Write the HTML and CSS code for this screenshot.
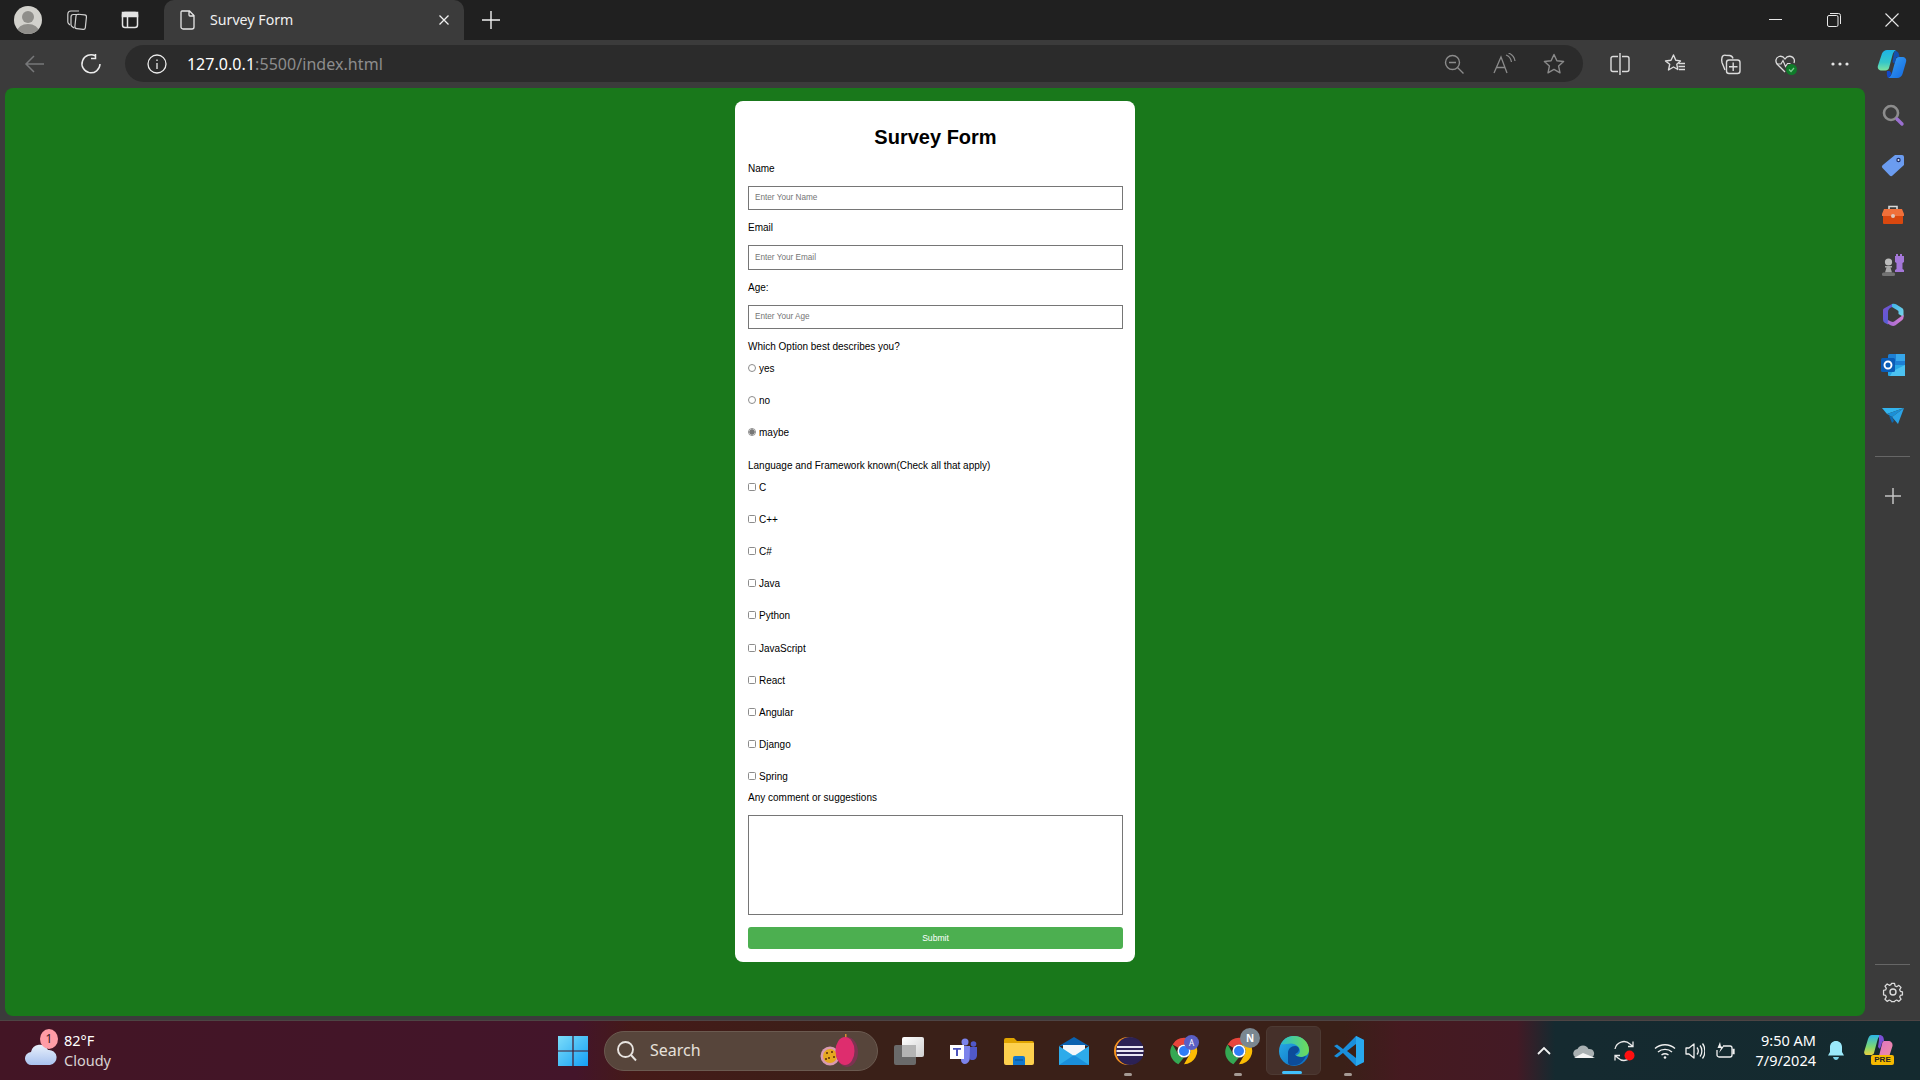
FILE: index.html
```html
<!DOCTYPE html>
<html lang="en">
<head>
<meta charset="utf-8">
<title>Survey Form</title>
<link rel="stylesheet" href="styles.css">
</head>
<body>
<header class="titlebar">
  <div class="cell profile"><svg width="28" height="28" viewBox="0 0 28 28"><defs><clipPath id="av"><circle cx="14" cy="14" r="14"/></clipPath></defs><g clip-path="url(#av)"><rect width="28" height="28" fill="#d2d1cc"/><circle cx="14" cy="11" r="6" fill="#8f8e8a"/><ellipse cx="14" cy="26" rx="11" ry="8" fill="#8f8e8a"/></g></svg></div>
  <div class="cell workspaces"><svg width="24" height="24" viewBox="0 0 24 24" fill="none" stroke="#d0d0d0" stroke-width="1.200"><rect x="10.500" y="6.500" width="10.500" height="14.500" rx="2" transform="rotate(6 15 13)"/><path d="M9 20 7 18.500c-.8-.6-1-1.200-1-2V9c0-1.400.8-2.500 2.300-2.500H14"/><path d="M5 17 3.500 15.500c-.6-.6-.7-1.200-.7-2V6.500C2.800 4.500 4 3 6 3h8"/></svg></div>
  <div class="cell verticaltabs"><svg width="20" height="20" viewBox="0 0 20 20" fill="none" stroke="#e4e4e4" stroke-width="1.500"><rect x="2.500" y="2.500" width="15" height="15" rx="2.500"/><rect x="2.500" y="2.500" width="15" height="4" fill="#e4e4e4"/><path d="M7.500 6v11"/></svg></div>
  <div class="tab">
    <svg class="tab-doc" width="18" height="20" viewBox="0 0 18 20" fill="none" stroke="#e6e6e6" stroke-width="1.300"><path d="M3 1h7.500L15 5.500V17a2 2 0 0 1-2 2H4a2 2 0 0 1-2-2V2.500C2 1.600 2.400 1 3 1ZM10 1v4a1 1 0 0 0 1 1h4"/></svg>
    <span class="tab-title">Survey Form</span>
    <svg class="tab-close" width="12" height="12" viewBox="0 0 12 12" stroke="#f0f0f0" stroke-width="1.300"><path d="M1.500 1.500l9 9M10.500 1.500l-9 9"/></svg>
  </div>
  <div class="cell newtab"><svg width="20" height="20" viewBox="0 0 20 20" stroke="#f0f0f0" stroke-width="1.400"><path d="M10 1v18M1 10h18"/></svg></div>
  <div class="window-controls">
    <svg width="14" height="14" viewBox="0 0 14 14" stroke="#e8e8e8"><path d="M0 6.500h13"/></svg>
    <svg width="14" height="14" viewBox="0 0 14 14" fill="none" stroke="#e8e8e8"><rect x=".5" y="2.500" width="10.500" height="11" rx="1.500"/><path d="M3 .5h8.500A2 2 0 0 1 13.500 2.500V11"/></svg>
    <svg width="14" height="14" viewBox="0 0 14 14" stroke="#e8e8e8" stroke-width="1.100"><path d="M.5.5l13 13M13.500.5l-13 13"/></svg>
  </div>
</header>

<nav class="toolbar">
  <div class="navcell"><svg width="22" height="20" viewBox="0 0 22 20" fill="none" stroke="#77787a" stroke-width="1.500"><path d="M20 10H2M10 2l-8 8 8 8"/></svg></div>
  <div class="navcell"><svg width="22" height="22" viewBox="0 0 22 22" fill="none" stroke="#ececec" stroke-width="1.500"><path d="M15.500 3A9 9 0 1 0 20 11M15.500 1v4.500H11"/></svg></div>
  <div class="address">
    <svg class="info" width="22" height="22" viewBox="0 0 22 22" fill="none" stroke="#ececec" stroke-width="1.300"><circle cx="11" cy="11" r="9"/><path d="M11 10v6M11 6.500v1.500"/></svg>
    <span class="url"><span class="host">127.0.0.1</span>:5500/index.html</span>
    <div class="addr-icons">
      <svg width="22" height="22" viewBox="0 0 22 22" fill="none" stroke="#8b8b8b" stroke-width="1.400"><circle cx="9.500" cy="9.500" r="7"/><path d="M14.500 14.500l6 6M6 9.500h7"/></svg>
      <svg width="24" height="22" viewBox="0 0 24 22" fill="none" stroke="#8b8b8b" stroke-width="1.300"><path d="M2 20 9 4l6 16M4.500 14.500h8.500M14 2c3 1 5 4 5.500 7M16.500 0c3.500 1.500 6 4.500 6.500 8"/></svg>
      <svg width="22" height="22" viewBox="0 0 22 22" fill="none" stroke="#8b8b8b" stroke-width="1.400"><path d="M11 1.500l2.900 6.200 6.700.8-5 4.600 1.400 6.700-6-3.400-6 3.400 1.400-6.700-5-4.600 6.700-.8Z" stroke-linejoin="round"/></svg>
    </div>
  </div>
  <div class="tools">
    <svg width="22" height="22" viewBox="0 0 22 22" fill="none" stroke="#dcdcdc" stroke-width="1.400"><path d="M9 3.500H4a2 2 0 0 0-2 2v11a2 2 0 0 0 2 2h5M13 3.500h5a2 2 0 0 1 2 2v11a2 2 0 0 1-2 2h-5M11 0v22"/></svg>
    <svg width="22" height="22" viewBox="0 0 22 22" fill="none" stroke="#dcdcdc" stroke-width="1.400"><path d="M9.500 2l2.300 5.300 4.700.6-3.700 3.400 1 5.200-4.300-2.500-5 3 1.200-5.700L1.500 8l5.500-.7Z" stroke-linejoin="round"/><path d="M14.500 10.500H21M14.500 13.500H21M15 16.500h6"/></svg>
    <svg width="22" height="22" viewBox="0 0 22 22" fill="none" stroke="#dcdcdc" stroke-width="1.400"><path d="M6 17 3 9.500C2.500 8 2.500 6.500 3 4.500c.400-1.500 2-2.500 3.500-2.300l4 .3c1.800.2 3 1.200 3.500 3"/><rect x="7.500" y="7" width="13.500" height="13.500" rx="2.500"/><path d="M14.200 9.500v8.500M10 13.700h8.500"/></svg>
    <svg width="24" height="24" viewBox="0 0 24 24" fill="none"><path d="M11 20 3.500 12.500C1 10 1.500 5.500 5 4.500c2.500-.7 4.500.3 6 2.500 1.500-2.200 3.500-3.200 6-2.500 3 .8 4 4 3 6.500" stroke="#dcdcdc" stroke-width="1.300"/><path d="M2.500 12H7l2-3.500 2.500 6 2-3h3" stroke="#dcdcdc" stroke-width="1.200"/><circle cx="17.500" cy="17.500" r="5.500" fill="#0f7b2a"/><path d="M15 17.500l2 2 3-3.500" stroke="#7fc88f" stroke-width="1.200"/></svg>
    <svg class="tool-more" width="22" height="22" viewBox="0 0 22 22" fill="#e4e4e4"><circle cx="4" cy="11" r="1.600"/><circle cx="11" cy="11" r="1.600"/><circle cx="18" cy="11" r="1.600"/></svg>
  </div>
  <div class="navcell copilot"><svg width="30" height="30" viewBox="0 0 30 30"><defs><linearGradient id="cpa" x1="0" y1="0" x2="0" y2="1"><stop offset="0" stop-color="#1db4e6"/><stop offset=".6" stop-color="#35c7c9"/><stop offset="1" stop-color="#7fe3a0"/></linearGradient><linearGradient id="cpb" x1="0" y1="0" x2="1" y2="1"><stop offset="0" stop-color="#37a3f5"/><stop offset="1" stop-color="#1468e0"/></linearGradient></defs><path d="M10 1h9c-2 1-3 3-3.500 5L12 19c-.4 1.500-1.800 2.500-3.500 2.500H5c-3 0-5-2-4-5l4-12C6 2.500 8 1 10 1Z" fill="url(#cpa)"/><path d="M22 8h3c3 0 5 2 4 5l-3.500 12c-.6 2-2.500 4-5.500 4h-9c2-1 3.300-2.800 4-5l3.500-13c.4-1.800 2-3 3.500-3Z" fill="url(#cpb)"/><path d="M18 2c2.500 0 4 1.500 4.500 6h-3l-2 7-2-2 1-6c.2-2 .5-4 1.500-5Z" fill="#1250b0"/><path d="M10 22h2.500l2 2c-.5 2-1.500 4-3.500 5-1-2-1.500-4-1-7Z" fill="#1248c8"/></svg></div>
</nav>

<div class="workspace">
  <main class="page">
    <form class="card">
      <h1 class="form-title">Survey Form</h1>
      <label class="field-label">Name</label>
      <input class="text-input" type="text" placeholder="Enter Your Name">
      <label class="field-label">Email</label>
      <input class="text-input" type="email" placeholder="Enter Your Email">
      <label class="field-label">Age:</label>
      <input class="text-input" type="text" placeholder="Enter Your Age">
      <p class="question">Which Option best describes you?</p>
      <label class="option"><input class="radio" type="radio" name="opt">yes</label>
      <label class="option"><input class="radio" type="radio" name="opt">no</label>
      <label class="option"><input class="radio" type="radio" name="opt" checked>maybe</label>
      <p class="question">Language and Framework known(Check all that apply)</p>
      <label class="option"><input class="check" type="checkbox">C</label>
      <label class="option"><input class="check" type="checkbox">C++</label>
      <label class="option"><input class="check" type="checkbox">C#</label>
      <label class="option"><input class="check" type="checkbox">Java</label>
      <label class="option"><input class="check" type="checkbox">Python</label>
      <label class="option"><input class="check" type="checkbox">JavaScript</label>
      <label class="option"><input class="check" type="checkbox">React</label>
      <label class="option"><input class="check" type="checkbox">Angular</label>
      <label class="option"><input class="check" type="checkbox">Django</label>
      <label class="option option-last"><input class="check" type="checkbox">Spring</label>
      <label class="field-label">Any comment or suggestions</label>
      <textarea class="comment"></textarea>
      <button class="submit" type="button">Submit</button>
    </form>
  </main>
  <aside class="sidebar">
    <svg width="24" height="24" viewBox="0 0 24 24" fill="none"><circle cx="10" cy="10" r="7" stroke="#8c8c8c" stroke-width="2.600"/><path d="M16 16l5 5" stroke="#9a6fd0" stroke-width="3.400" stroke-linecap="round"/></svg>
    <svg width="24" height="24" viewBox="0 0 24 24"><path d="M14 2h7a2 2 0 0 1 2 2v8L11.500 22.500a2 2 0 0 1-2.800 0L1.500 15a2 2 0 0 1 0-2.800Z" fill="#6b9cf0"/><circle cx="17.500" cy="7" r="2.200" fill="#1d2f66"/><circle cx="17.500" cy="7" r="1" fill="#dfe8fb"/></svg>
    <svg width="24" height="24" viewBox="0 0 24 24"><path d="M8 6V3.500h8V6" fill="none" stroke="#d9d9d9" stroke-width="1.600"/><path d="M3 6h18l2 5v2H1v-2Z" fill="#f0703a"/><path d="M2 13h20v7a1 1 0 0 1-1 1H3a1 1 0 0 1-1-1Z" fill="#d9480f"/><circle cx="12" cy="13" r="2" fill="#e0c8bc"/></svg>
    <svg width="24" height="24" viewBox="0 0 24 24"><path d="M15 1h2v2h2V1h2v2h2v6l-1.500 1v6l1.500 1v2h-9v-2l1.500-1v-6L14 9V3h1Z" fill="#a477d8"/><circle cx="7.500" cy="9" r="3.600" fill="#bcbcbc"/><path d="M4 13h7v1.500H9.500l1.500 5H4l1.500-5H4Z" fill="#a8a8a8"/><rect x="1" y="19.500" width="13" height="3.500" rx="1.500" fill="#727272"/></svg>
    <svg width="24" height="24" viewBox="0 0 24 24"><defs><linearGradient id="m1" x1="0" y1="0" x2="1" y2="1"><stop offset="0" stop-color="#7d4fd0"/><stop offset="1" stop-color="#3f67d6"/></linearGradient><linearGradient id="m2" x1="0" y1="0" x2="1" y2="0"><stop offset="0" stop-color="#a267d6"/><stop offset="1" stop-color="#d07ed0"/></linearGradient><linearGradient id="m3" x1="0" y1="0" x2="1" y2="1"><stop offset="0" stop-color="#3fb2ea"/><stop offset="1" stop-color="#7ad8e8"/></linearGradient></defs><path d="M11 1 3 5.500C2 6 2 7 2 8v8c0 2 .6 3 2 4l3 1.500V9c0-2 1-3.500 3-4.500L14 3Z" fill="url(#m1)"/><path d="M11 1c1.500-.6 3-.4 4 .2l6 3.800c1 .7 1.500 1.800 1.500 3V14l-5-3V9c0-1-.5-1.500-1.500-2L11 4Z" fill="url(#m3)"/><path d="M22.500 14c0 1.500-.5 2.500-1.500 3.200l-6.500 5c-1.500 1-3 1-4.500.3L6.500 20.500 7 17l3 1.500c1.500.7 2.500.5 3.500-.2l4-3 5-3.500Z" fill="url(#m2)"/></svg>
    <svg width="24" height="24" viewBox="0 0 24 24"><rect x="7" y="1" width="17" height="21" rx="1.500" fill="#1d7fd4"/><rect x="15" y="1" width="9" height="7" fill="#36a6ea"/><path d="M7 12h17v10a1 1 0 0 1-1 1H8a1 1 0 0 1-1-1Z" fill="#26a6e5"/><path d="M12 18l12-6v11H9Z" fill="#4cc2f1"/><rect x="0" y="5" width="14" height="14" rx="1.500" fill="#0a5cb6"/><circle cx="7" cy="12" r="3.500" fill="none" stroke="#fff" stroke-width="1.900"/></svg>
    <svg width="24" height="24" viewBox="0 0 24 24"><path d="M1 5h22L6 11Z" fill="#33b4ee"/><path d="M6 11 23 5 11 14Z" fill="#1b8fd6"/><path d="M11 14 23 5 17 21Z" fill="#2ba3e6"/><path d="M8 12.500 11 14l2 4-2 2Z" fill="#0d66b0"/></svg>
    <div class="side-divider"></div>
    <svg width="16" height="16" viewBox="0 0 16 16" stroke="#c4c4c4" stroke-width="1.500"><path d="M8 0v16M0 8h16"/></svg>
    <div class="side-spacer"></div>
    <div class="side-divider side-divider-low"></div>
    <svg class="gear" width="22" height="22" viewBox="0 0 22 22" fill="none" stroke="#dcdcdc" stroke-width="1.400"><circle cx="11" cy="11" r="3"/><path d="M9.300 1.500h3.400l.6 2.800 1.800.8 2.400-1.500 2.400 2.400-1.500 2.400.8 1.800 2.300.6v3.400l-2.300.6-.8 1.800 1.500 2.400-2.400 2.400-2.400-1.500-1.800.8-.6 1.100H9.300l-.6-1.100-1.800-.8-2.400 1.500-2.400-2.400 1.500-2.400-.8-1.800-2.300-.6V9.300l2.300-.6.8-1.800-1.500-2.400 2.400-2.400 2.400 1.500 1.800-.8Z" stroke-linejoin="round" transform="translate(1.100 1.100) scale(.9)"/></svg>
  </aside>
</div>

<footer class="taskbar">
  <div class="weather">
    <div class="weather-icon">
      <svg width="32" height="26" viewBox="0 0 32 26"><defs><linearGradient id="cl" x1="0" y1="0" x2="0" y2="1"><stop offset="0" stop-color="#e8f0fb"/><stop offset="1" stop-color="#a9c2ef"/></linearGradient></defs><path d="M7 25a6.500 6.500 0 0 1-1-13 9 9 0 0 1 17-2 7.500 7.500 0 0 1 2 15Z" fill="url(#cl)"/></svg>
      <span class="weather-badge">1</span>
    </div>
    <div class="weather-text"><span class="temp">82°F</span><span class="cond">Cloudy</span></div>
  </div>
  <div class="center">
    <svg class="start" width="30" height="30" viewBox="0 0 30 30"><defs><linearGradient id="w" x1="0" y1="0" x2="1" y2="1"><stop offset="0" stop-color="#7cdcf9"/><stop offset="1" stop-color="#14a0f5"/></linearGradient></defs><path d="M0 0h14.400v14.400H0ZM15.600 0H30v14.400H15.600ZM0 15.600h14.400V30H0ZM15.600 15.600H30V30H15.600Z" fill="url(#w)"/></svg>
    <div class="searchbox">
      <svg width="22" height="22" viewBox="0 0 22 22" fill="none" stroke="#e8e4e0" stroke-width="1.900"><circle cx="9.500" cy="9.500" r="7.500"/><path d="M15 15l5 5.500"/></svg>
      <span class="search-label">Search</span>
      <svg class="fruit" width="40" height="34" viewBox="0 0 40 34"><circle cx="10" cy="22" r="9.500" fill="#d99ab0"/><circle cx="10" cy="22" r="7" fill="#e6a820"/><g fill="#5b2a0c"><circle cx="7" cy="19" r="1"/><circle cx="12" cy="18" r="1"/><circle cx="9" cy="24" r="1"/><circle cx="14" cy="23" r="1"/><circle cx="6" cy="25" r="1"/></g><path d="M25 0h1.500v6H25Z" fill="#d68a30"/><ellipse cx="27" cy="18" rx="11" ry="15" fill="#7d3352"/><ellipse cx="25" cy="17" rx="9.500" ry="14" fill="#de2d6e"/></svg>
    </div>
    <div class="apps">
      <div class="app"><svg width="30" height="28" viewBox="0 0 30 28"><defs><linearGradient id="tv" x1="0" y1="0" x2="1" y2="1"><stop offset="0" stop-color="#fff"/><stop offset="1" stop-color="#d0d0d0"/></linearGradient></defs><rect x="0" y="8" width="22" height="20" rx="2" fill="#6a6a6a"/><rect x="8" y="0" width="22" height="20" rx="2" fill="url(#tv)"/><rect x="8" y="8" width="14" height="12" fill="#b4b4b4"/></svg></div>
      <div class="app"><svg width="28" height="26" viewBox="0 0 28 26"><circle cx="15" cy="4" r="3.500" fill="#7b83eb"/><circle cx="23.500" cy="6" r="2.800" fill="#5059c9"/><path d="M11 8h9v11c0 4-2.500 7-5 7s-4-2-4-4Z" fill="#7b83eb"/><path d="M20 9h7v8c0 3-2 5-4.500 5-1.500 0-2.500-.5-3-1Z" fill="#5059c9"/><rect x="0" y="7" width="14" height="14" fill="#fff"/><path d="M3 10h8v1.800H8V18H6v-6.200H3Z" fill="#4b53bc"/></svg></div>
      <div class="app"><svg width="30" height="28" viewBox="0 0 30 28"><path d="M0 3a2 2 0 0 1 2-2h8l3 3h15a2 2 0 0 1 2 2v6H0Z" fill="#e0a400"/><path d="M0 6h30v20a2 2 0 0 1-2 2H2a2 2 0 0 1-2-2Z" fill="#fdd04e"/><path d="M9 21a2 2 0 0 1 2-2h8a2 2 0 0 1 2 2v7H9Z" fill="#1178cf"/><path d="M11 23h8" stroke="#0b4d8a" stroke-width="1"/></svg></div>
      <div class="app"><svg width="30" height="28" viewBox="0 0 30 28"><path d="M0 9 15 0l15 9Z" fill="#0a62b0"/><path d="M4 8h22v6l-11 6-11-6Z" fill="#f4f7fa"/><path d="M0 9l15 10L30 9v19H0Z" fill="#2dabea"/><path d="M0 28 15 18l15 10Z" fill="#1a8fdb"/></svg></div>
      <div class="app app-open"><svg width="30" height="30" viewBox="0 0 30 30"><circle cx="14" cy="15" r="14" fill="#f7941e"/><circle cx="16" cy="15" r="14" fill="#2c2255"/><circle cx="16" cy="15" r="13" fill="#2c2255"/><g fill="#e8e6f2"><rect x="3" y="10" width="26" height="2"/><rect x="2.500" y="14" width="27" height="2"/><rect x="3" y="18" width="26" height="2"/></g></svg></div>
      <div class="app"><svg width="30" height="30" viewBox="0 0 48 48"><path d="M24 3a21 21 0 0 1 18.200 10.500H24a10.500 10.500 0 0 0-9.100 5.250L5.800 13.500A21 21 0 0 1 24 3Z" fill="#e8453c"/><path d="M5.800 13.500l9.100 15.750A10.500 10.500 0 0 0 24 34.500L15 45A21 21 0 0 1 5.800 13.500Z" fill="#34a853"/><path d="M42.200 13.500A21 21 0 0 1 24 45l9.100-15.750A10.500 10.500 0 0 0 33.100 18.750 10.500 10.500 0 0 0 24 13.500Z" fill="#fbbc04"/><circle cx="24" cy="24" r="10.500" fill="#fff"/><circle cx="24" cy="24" r="8" fill="#2f7df6"/></svg><span class="app-badge badge-a">A</span></div>
      <div class="app app-open"><svg width="30" height="30" viewBox="0 0 48 48"><path d="M24 3a21 21 0 0 1 18.200 10.500H24a10.500 10.500 0 0 0-9.100 5.250L5.800 13.500A21 21 0 0 1 24 3Z" fill="#e8453c"/><path d="M5.800 13.500l9.100 15.750A10.500 10.500 0 0 0 24 34.500L15 45A21 21 0 0 1 5.800 13.500Z" fill="#34a853"/><path d="M42.200 13.500A21 21 0 0 1 24 45l9.100-15.750A10.500 10.500 0 0 0 33.100 18.750 10.500 10.500 0 0 0 24 13.500Z" fill="#fbbc04"/><circle cx="24" cy="24" r="10.500" fill="#fff"/><circle cx="24" cy="24" r="8" fill="#2f7df6"/></svg><span class="app-badge badge-n">N</span></div>
      <div class="app app-active"><svg width="30" height="30" viewBox="0 0 30 30"><defs><linearGradient id="e1" x1="0" y1="0" x2="1" y2="1"><stop offset="0" stop-color="#29b0e8"/><stop offset="1" stop-color="#0a68c0"/></linearGradient><linearGradient id="e2" x1="0" y1="0" x2="1" y2="0"><stop offset="0" stop-color="#2bc0c8"/><stop offset="1" stop-color="#6fdc58"/></linearGradient></defs><circle cx="15" cy="15" r="15" fill="url(#e1)"/><path d="M2 8C5 2 10 0 15 0c8 0 15 6 15 14 0 4-3 7-8 7-2 0-4-.5-5-1.500 3-1 4-3 4-5 0-3-4-7-9-7-4 0-8 1.500-10 0.500Z" fill="url(#e2)"/><path d="M9 17c0-4 3-7 7-7 2.500 0 4 1.500 4 3.500 0 1.500-1 3-3 4-2 1 0 3 5 3.500 2 .2 4-.5 5-1.500-2 6-7 10-13 10-3 0-5-1-5-3 0-3 0-6 0-9.500Z" fill="#0c4c9a"/></svg></div>
      <div class="app app-open"><svg width="30" height="30" viewBox="0 0 30 30"><path d="M22 0 30 4v22l-8 4L9 17l-6 4.500L0 20l6.500-5L0 10l3-1.500L9 13Z" fill="#1a8fdc"/><path d="M22 8v14l-9-7Z" fill="#3b2018"/><path d="M22 0 30 4v22l-8 4Z" fill="#28a8ee"/></svg></div>
    </div>
  </div>
  <div class="tray">
    <svg class="t-chev" width="16" height="10" viewBox="0 0 16 10" fill="none" stroke="#f2f2f2" stroke-width="1.800"><path d="M2 8l6-6 6 6"/></svg>
    <svg class="t-cloud" width="22" height="14" viewBox="0 0 22 14"><path d="M5 14a4.500 4.500 0 0 1-.5-9 6 6 0 0 1 11 0 4.500 4.500 0 0 1 2 9Z" fill="#a9b0b2"/><path d="M1 14l9-5 5 2 7 3Z" fill="#f4f4f4"/></svg>
    <svg class="t-sync" width="22" height="22" viewBox="0 0 22 22" fill="none" stroke="#eaeaea" stroke-width="1.300"><path d="M1 9a9 9 0 0 1 15-5l3 2.500M19 1.500V6.500H14M19 13a9 9 0 0 1-15 5l-3-2.500M1 20.500v-5h5"/><circle cx="15.500" cy="15.500" r="5" fill="#ff1010" stroke="none"/></svg>
    <svg class="t-wifi" width="22" height="16" viewBox="0 0 22 16" fill="none" stroke="#f0f0f0" stroke-width="1.400"><path d="M1 5.500c5.500-5 14.500-5 20 0M4 9c3.800-3.500 10.200-3.500 14 0M7.500 12c2-1.500 5-1.500 7 0"/><circle cx="11" cy="14.500" r="1.300" fill="#f0f0f0" stroke="none"/></svg>
    <svg class="t-vol" width="20" height="18" viewBox="0 0 20 18" fill="none" stroke="#f0f0f0" stroke-width="1.300"><path d="M1 6h3l5-4v14l-5-4H1Z" stroke-linejoin="round"/><path d="M12 5.500c1.500 2 1.500 5 0 7M15 3.500c2.500 3 2.500 8 0 11M17.500 1.500c3.200 4 3.200 11 0 15"/></svg>
    <svg class="t-batt" width="20" height="18" viewBox="0 0 20 18" fill="none" stroke="#f0f0f0" stroke-width="1.300"><path d="M8 4h7a2 2 0 0 1 2 2v7a2 2 0 0 1-2 2H4a2 2 0 0 1-2-2V8"/><path d="M17.500 7.500h1.500v4h-1.500" fill="#f0f0f0"/><path d="M5 0 2.500 6H6l-2 5 5-6.500H6Z" fill="#f0f0f0" stroke="none"/></svg>
    <div class="clock"><span>9:50 AM</span><span>7/9/2024</span></div>
    <svg class="t-bell" width="18" height="20" viewBox="0 0 18 20"><path d="M9 0c3.500 0 6 2.600 6 6v5l2 3.500H1L3 11V6c0-3.400 2.500-6 6-6Z" fill="#9be9fb"/><path d="M6 16h6c-.5 2-1.700 3-3 3s-2.500-1-3-3Z" fill="#7cd3ea"/></svg>
    <div class="pre-icon"><svg width="30" height="24" viewBox="0 0 30 24"><defs><linearGradient id="p1" x1="0" y1="0" x2="0" y2="1"><stop offset="0" stop-color="#2bb5e8"/><stop offset=".6" stop-color="#7fd870"/><stop offset="1" stop-color="#e8d040"/></linearGradient><linearGradient id="p2" x1="0" y1="0" x2="1" y2="1"><stop offset="0" stop-color="#e070c8"/><stop offset="1" stop-color="#f090a0"/></linearGradient></defs><path d="M8 0h9c-2 1-3 3-3.500 5L10 18c-.4 1.500-1.800 2-3.500 2H3c-2 0-3.500-1.500-2.600-4L4 4C5 1.500 6 0 8 0Z" fill="url(#p1)"/><path d="M20 6h4c3 0 5 2 4.500 5L25 22c-.4 1.300-1.500 2-3 2h-10c2-1 3-2.800 3.500-5l2.500-10c.3-1.800 1-3 2-3Z" fill="url(#p2)"/><path d="M15 0c3 0 5 1.500 5 6-1.400 0-2 1-2.300 3L16 14l-2-2 1-7Z" fill="#7a4fd6"/></svg><span class="pre-tag">PRE</span></div>
  </div>
</footer>
</body>
</html>
```

FILE: styles.css
```css
* { box-sizing: border-box; }
html, body { margin: 0; padding: 0; }
body {
  width: 1920px;
  height: 1080px;
  overflow: hidden;
  display: flex;
  flex-direction: column;
  background: #3b3b3b;
  font-family: "Noto Sans", "Open Sans", sans-serif;
}
svg { display: block; flex: none; }

/* title bar */
.titlebar { height: 40px; flex: none; display: flex; background: #202020; }
.cell { height: 40px; display: flex; align-items: center; justify-content: center; }
.profile { width: 56px; }
.workspaces { width: 42px; }
.verticaltabs { width: 44px; margin-left: 10px; }
.tab {
  width: 300px;
  height: 40px;
  margin-left: 12px;
  padding: 0 14px 0 15px;
  display: flex;
  align-items: center;
  background: #3b3b3b;
  border-radius: 10px 10px 0 0;
  color: #f0f0f0;
  font-size: 14.2px;
}
.tab-title { margin-left: 13px; flex: 1; margin-top: -1px; }
.newtab { width: 54px; }
.window-controls { margin-left: auto; display: flex; align-items: center; gap: 44px; padding-right: 21px; }

/* toolbar */
.toolbar { height: 48px; flex: none; display: flex; align-items: flex-start; padding: 5px 0 0 7px; background: #3b3b3b; }
.navcell { width: 56px; height: 37px; display: flex; align-items: center; justify-content: center; }
.address {
  width: 1460px;
  height: 37px;
  margin-left: 6px;
  padding: 0 18px 0 21px;
  display: flex;
  align-items: center;
  background: #2b2b2b;
  border-radius: 19px;
  font-size: 16px;
  letter-spacing: .05px;
  color: #8d8d8d;
}
.url { margin-left: 19px; }
.host { color: #fff; }
.addr-icons { margin-left: auto; display: flex; align-items: center; gap: 27px; }
.tools { width: 282px; height: 37px; padding: 0 0 0 25.5px; display: flex; align-items: center; gap: 33px; }
.tool-more { margin-left: -1.5px; }
.copilot { width: 56px; margin-left: -1px; }

/* page */
.workspace { height: 932px; flex: none; display: flex; }
.page {
  width: 1860px;
  height: 928px;
  margin-left: 5px;
  padding-top: 13px;
  display: flex;
  justify-content: center;
  align-items: flex-start;
  background: #19781b;
  border-radius: 8px;
}
.card {
  width: 400px;
  display: flex;
  flex-direction: column;
  align-items: flex-start;
  padding: 24px 12px 13px 13px;
  background: #fff;
  border-radius: 8px;
  font-family: "Liberation Sans", Arial, sans-serif;
  font-size: 10px;
  line-height: 12px;
  color: #000;
}
.form-title {
  align-self: stretch;
  margin: 0 0 12.5px;
  height: 25px;
  font-size: 20px;
  line-height: 25px;
  font-weight: 700;
  text-align: center;
}
.field-label { display: block; height: 12px; margin-bottom: 11px; }
.text-input {
  width: 375px;
  height: 24.5px;
  margin: 0 0 12px;
  padding: 0 6px;
  border: 1.34px solid #767676;
  border-radius: 0;
  background: #fff;
  font: 8.2px "Liberation Sans", Arial, sans-serif;
}
.text-input::placeholder { color: #757575; }
.question { margin: 0 0 10px; height: 12px; }
.option { display: flex; align-items: center; height: 12px; margin-bottom: 20.2px; }
.option-last { margin-bottom: 8.5px; }
.radio, .check {
  appearance: none;
  width: 8px;
  height: 8px;
  margin: -2px 3px 0 0;
  background: #fff;
  border: 1px solid #8c8c8c;
  flex: none;
}
.radio { border-radius: 50%; }
.radio:checked { background: radial-gradient(circle, #777 0, #777 2.4px, #fff 3px); }
.check { border-radius: 1.500px; }
.comment {
  display: block;
  width: 375px;
  height: 100px;
  margin: 0 0 12px;
  border: 1.34px solid #767676;
  border-radius: 0;
  resize: none;
  background: #fff;
}
.submit {
  width: 375px;
  height: 22px;
  border: 0;
  border-radius: 3px;
  background: #4caf50;
  color: #fff;
  font: 8.6px "Liberation Sans", Arial, sans-serif;
}

/* edge sidebar */
.sidebar {
  width: 55px;
  height: 932px;
  padding: 15px 0 17px;
  display: flex;
  flex-direction: column;
  align-items: center;
  gap: 26px;
  background: #3b3b3b;
}
.side-divider { width: 35px; height: 1px; background: #666; flex: none; margin: 3px 0 5px; }
.side-divider-low { margin: 0 0 -10px; }
.side-spacer { flex: 1; margin: -26px 0; }

/* taskbar */
.taskbar {
  height: 60px;
  flex: none;
  position: relative;
  display: flex;
  align-items: center;
  border-top: 1px solid #4d4444;
  background: linear-gradient(90deg, #431525 0, #43152a 30%, #451a18 33%, #3a2018 45%, #3a2018 70%, #451a20 73%, #431a25 79%, #152a30 81%, #142a2f 100%);
  color: #fff;
}
.weather { width: 558px; flex: none; display: flex; align-items: center; padding-left: 25px; }
.weather-icon { position: relative; width: 32px; height: 26px; margin-top: 4px; }
.weather-badge {
  position: absolute;
  left: 15px;
  top: -11px;
  width: 18px;
  height: 20px;
  border-radius: 50%;
  background: #ff9ca6;
  color: #3a1a20;
  font-size: 12px;
  line-height: 20px;
  text-align: center;
}
.weather-text { margin-left: 7px; margin-top: -2px; display: flex; flex-direction: column; font-size: 14.5px; line-height: 20px; }
.cond { color: #d9d2d2; }
.center { flex: none; display: flex; align-items: center; }
.start { margin-top: 0; }
.searchbox {
  width: 274px;
  height: 40px;
  margin-left: 16px;
  padding: 0 17px 0 11px;
  display: flex;
  align-items: center;
  background: #57453b;
  border: 1px solid #6b5a50;
  border-radius: 20px;
  color: #e6e0da;
  font-size: 16px;
}
.search-label { margin-left: 12px; margin-top: -1px; }
.fruit { margin-left: auto; }
.apps { margin-left: 3px; display: flex; align-items: center; }
.app {
  position: relative;
  width: 55px;
  height: 49px;
  display: flex;
  align-items: center;
  justify-content: center;
}
.app-open::after, .app-active::after {
  content: "";
  position: absolute;
  left: 23px;
  bottom: -1px;
  width: 8px;
  height: 3px;
  border-radius: 2px;
  background: #a59a94;
}
.app-active { background: #45302a; border-radius: 6px; border: 1px solid #4d3a33; }
.app-active::after { left: 15px; width: 20px; background: #42c0fb; bottom: 0; }
.app-badge {
  position: absolute;
  border-radius: 50%;
  text-align: center;
  color: #fff;
}
.badge-a { left: 28px; top: 9px; width: 15px; height: 15px; font-size: 8px; line-height: 15px; background: #5a5fc4; }
.badge-n { left: 29px; top: 2px; width: 20px; height: 20px; font-size: 10px; line-height: 20px; background: #7a8790; font-weight: 700; }
.tray { flex: none; position: absolute; left: 1533px; right: 0; top: 0; height: 59px; display: flex; align-items: center; }
.t-chev { margin-left: 3px; }
.t-cloud { margin-left: 21px; }
.t-sync { margin-left: 19px; }
.t-wifi { margin-left: 18px; }
.t-vol { margin-left: 9px; }
.t-batt { margin-left: 10px; }
.clock { width: 70px; margin-left: 11px; margin-top: -2px; display: flex; flex-direction: column; align-items: flex-end; font-size: 14.5px; line-height: 20px; }
.t-bell { margin-left: 11px; }
.pre-icon { position: relative; margin-left: 19px; width: 30px; height: 32px; }
.pre-tag {
  position: absolute;
  left: 7px;
  top: 20px;
  width: 23px;
  height: 10px;
  border-radius: 2px;
  background: #f5b800;
  color: #222;
  font: 700 8px/10px "Liberation Sans", sans-serif;
  text-align: center;
}
```
